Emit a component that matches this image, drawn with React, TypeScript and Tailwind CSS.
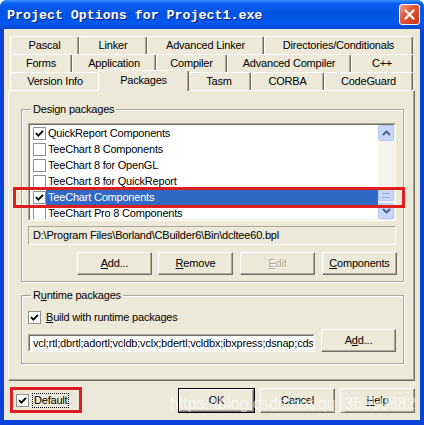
import React from "react";

const SANS = "font-['Liberation_Sans',Arial,sans-serif]";

function Box({ checked }: { checked: boolean }) {
  return (
    <div className="w-[13px] h-[13px] shrink-0 bg-white border border-[#8E8F8F] flex items-center justify-center">
      {checked && (
        <svg width="9" height="9" viewBox="0 0 9 9">
          <path d="M1 4.2 L3.4 6.6 L8 1.8" stroke="#000" strokeWidth="1.9" fill="none" />
        </svg>
      )}
    </div>
  );
}

function Btn({
  children,
  className = "",
  disabled = false,
}: {
  children: React.ReactNode;
  className?: string;
  disabled?: boolean;
}) {
  return (
    <div
      className={`h-[23px] w-[75px] shrink-0 flex items-center justify-center bg-[#ECE9D8] border border-t-white border-l-white border-r-[#716F64] border-b-[#716F64] shadow-[inset_-1px_-1px_0_#ACA899] ${
        disabled ? "text-[#ACA899] [text-shadow:1px_1px_0_#fff]" : "text-black"
      } ${className}`}
    >
      {children}
    </div>
  );
}

function Tab({ label, w }: { label: string; w: string }) {
  return (
    <div
      className={`${w} h-[18px] shrink-0 flex items-center justify-center rounded-t-[2px] bg-[#ECE9D8] border-t border-l border-t-white border-l-white border-r border-r-[#716F64] shadow-[inset_-1px_0_0_#ACA899]`}
    >
      {label}
    </div>
  );
}

function ScrollBtn({ up }: { up: boolean }) {
  return (
    <div className="h-[16px] w-[16px] rounded-[2px] border border-[#B4C6F3] bg-[#C8D7FB] flex items-center justify-center">
      <svg width="9" height="6" viewBox="0 0 9 6">
        <path
          d={up ? "M1 5 L4.5 1.5 L8 5" : "M1 1 L4.5 4.5 L8 1"}
          stroke="#4D6185"
          strokeWidth="2"
          fill="none"
        />
      </svg>
    </div>
  );
}

function GroupBox({
  label,
  className,
  children,
}: {
  label: React.ReactNode;
  className: string;
  children: React.ReactNode;
}) {
  return (
    <div
      className={`relative border border-[#ACA899] shadow-[inset_1px_1px_0_#fff,1px_1px_0_#fff] ${className}`}
    >
      <div className="absolute -top-[8px] left-[9px] px-[2px] bg-[#ECE9D8] leading-[14px]">{label}</div>
      {children}
    </div>
  );
}

const items: { label: string; checked: boolean; sel?: boolean }[] = [
  { label: "QuickReport Components", checked: true },
  { label: "TeeChart 8 Components", checked: false },
  { label: "TeeChart 8 for OpenGL", checked: false },
  { label: "TeeChart 8 for QuickReport", checked: false },
  { label: "TeeChart Components", checked: true, sel: true },
  { label: "TeeChart Pro 8 Components", checked: false },
];

export default function App() {
  return (
    <div
      className={`relative w-[424px] h-[425px] flex flex-col overflow-hidden rounded-t-[7px] bg-[#0842D6] text-[11px] tracking-[-0.2px] text-black ${SANS}`}
    >
      {/* Title bar */}
      <div className="h-[29px] shrink-0 flex items-center pl-[7px] pr-[4px] bg-[linear-gradient(to_bottom,#3D95FF_0%,#0A5FF2_12%,#0054E3_45%,#0058EC_80%,#0846CC_100%)]">
        <div className="flex-1 text-white font-bold text-[13.3px] tracking-normal font-['Liberation_Mono',monospace] [text-shadow:1px_1px_0_#0A1E80] pt-[2px]">
          Project Options for Project1.exe
        </div>
        <div className="w-[21px] h-[21px] rounded-[3px] border border-white bg-[linear-gradient(to_bottom_right,#F0A08A,#E05A3A_40%,#C4361A)] flex items-center justify-center">
          <svg width="11" height="11" viewBox="0 0 11 11">
            <path d="M1.5 1.5 L9.5 9.5 M9.5 1.5 L1.5 9.5" stroke="#fff" strokeWidth="2.2" strokeLinecap="round" />
          </svg>
        </div>
      </div>

      {/* Client */}
      <div className="flex-1 mx-[4px] mb-[5px] bg-[#ECE9D8] flex flex-col pt-[7px] pl-[4px] pr-[5px]">
        {/* Tabs */}
        <div className="ml-[2px] flex flex-col">
          <div className="flex">
            <Tab label="Pascal" w="w-[69px]" />
            <Tab label="Linker" w="w-[68px]" />
            <Tab label="Advanced Linker" w="w-[117px]" />
            <Tab label="Directories/Conditionals" w="w-[149px]" />
          </div>
          <div className="flex">
            <Tab label="Forms" w="w-[62px]" />
            <Tab label="Application" w="w-[84px]" />
            <Tab label="Compiler" w="w-[71px]" />
            <Tab label="Advanced Compiler" w="w-[124px]" />
            <Tab label="C++" w="w-[62px]" />
          </div>
          <div className="flex items-end h-[18px] relative z-10">
            <Tab label="Version Info" w="w-[90px]" />
            <div className="relative top-[1px] w-[91px] h-[21px] -mx-[2px] shrink-0 flex items-center justify-center pb-[1px] rounded-t-[2px] bg-[#ECE9D8] border-t border-l border-t-white border-l-white border-r border-r-[#716F64] shadow-[inset_-1px_0_0_#ACA899]">
              Packages
            </div>
            <Tab label="Tasm" w="w-[64px]" />
            <Tab label="CORBA" w="w-[73px]" />
            <Tab label="CodeGuard" w="w-[89px]" />
          </div>
        </div>

        {/* Panel */}
        <div className="h-[291px] shrink-0 border border-t-white border-l-white border-r-[#716F64] border-b-[#716F64] shadow-[inset_-1px_-1px_0_#ACA899] pl-[12px] pr-[10px] pt-[18px] flex flex-col">
          <GroupBox label="Design packages" className="h-[173px] pl-[6px] pt-[13px] pr-[7px] flex flex-col">
            {/* listbox */}
            <div className="h-[98px] w-[368px] border border-t-[#ACA899] border-l-[#ACA899] border-r-white border-b-white">
              <div className="h-full w-full border border-t-[#716F64] border-l-[#716F64] border-r-[#F1EFE2] border-b-[#F1EFE2] bg-white flex overflow-hidden">
                <div className="flex-1 flex flex-col overflow-hidden">
                  {items.map((it) => (
                    <div key={it.label} className="h-[16px] shrink-0 flex items-center pl-[3px]">
                      <Box checked={it.checked} />
                      <div
                        className={`flex-1 h-[16px] leading-[16px] pl-[2px] ${
                          it.sel ? "bg-[#316AC5] text-white" : ""
                        }`}
                      >
                        {it.label}
                      </div>
                    </div>
                  ))}
                </div>
                <div className="w-[16px] shrink-0 bg-[#F4F3EC] flex flex-col">
                  <ScrollBtn up />
                  <div className="flex-1 flex flex-col justify-end">
                    <div className="h-[12px] mb-[2px] rounded-[2px] border border-[#B4C6F3] bg-[#C8D7FB] flex items-center justify-center">
                      <div className="w-[8px] h-[5px] border-y border-[#8FA9E6]" />
                    </div>
                  </div>
                  <ScrollBtn up={false} />
                </div>
              </div>
            </div>
            {/* path edit */}
            <div className="mt-[5px] h-[19px] w-[368px] border border-t-[#ACA899] border-l-[#ACA899] border-r-white border-b-white flex items-center pl-[4px]">
              D:\Program Files\Borland\CBuilder6\Bin\dcltee60.bpl
            </div>
            {/* buttons */}
            <div className="mt-[7px] ml-[49px] flex gap-[6px]">
              <Btn>
                <span><span className="underline">A</span>dd...</span>
              </Btn>
              <Btn>
                <span><span className="underline">R</span>emove</span>
              </Btn>
              <Btn disabled className="ml-[1px]">
                <span><span className="underline">E</span>dit</span>
              </Btn>
              <Btn className="ml-[1px]">
                <span><span className="underline">C</span>omponents</span>
              </Btn>
            </div>
          </GroupBox>

          <GroupBox
            label={<span>R<span className="underline">u</span>ntime packages</span>}
            className="mt-[13px] h-[69px] pl-[6px] pr-[7px] pt-[14px] flex flex-col"
          >
            <div className="flex items-center gap-[5px] h-[15px]">
              <Box checked />
              <span><span className="underline">B</span>uild with runtime packages</span>
            </div>
            <div className="mt-[4px] flex items-end gap-[6px]">
              <div className="h-[18px] w-[287px] border border-t-[#ACA899] border-l-[#ACA899] border-r-white border-b-white">
                <div className="h-full w-full border border-t-[#716F64] border-l-[#716F64] border-r-[#F1EFE2] border-b-[#F1EFE2] bg-white overflow-hidden whitespace-nowrap leading-[14px] pl-[3px]">
                  vcl;rtl;dbrtl;adortl;vcldb;vclx;bdertl;vcldbx;ibxpress;dsnap;cds
                </div>
              </div>
              <Btn>
                <span>A<span className="underline">d</span>d...</span>
              </Btn>
            </div>
          </GroupBox>
        </div>

        {/* Bottom row */}
        <div className="mt-[7px] flex items-center h-[25px]">
          <div className="ml-[8px] flex items-center gap-[3px]">
            <Box checked />
            <span className="border border-dotted border-black px-[1px] leading-[13px]">Default</span>
          </div>
          <div className="ml-auto flex gap-[5px]">
            <div className="border border-black">
              <Btn className="w-[73px] h-[23px]">OK</Btn>
            </div>
            <Btn className="h-[25px]">Cancel</Btn>
            <Btn className="h-[25px]">
              <span><span className="underline">H</span>elp</span>
            </Btn>
          </div>
        </div>
      </div>

      {/* Red annotations */}
      <div className="absolute left-[13px] top-[187px] w-[392px] h-[21px] border-[3px] border-[#DD1E1E] z-20" />
      <div className="absolute left-[10px] top-[387px] w-[72px] h-[26px] border-[3px] border-[#DD1E1E] z-20" />

      {/* Watermark */}
      <div className="absolute left-[170px] top-[392px] text-[16px] tracking-normal text-white/60 whitespace-nowrap z-20 pointer-events-none">
        https://blog.csdn.net/qq_36359882
      </div>
    </div>
  );
}
